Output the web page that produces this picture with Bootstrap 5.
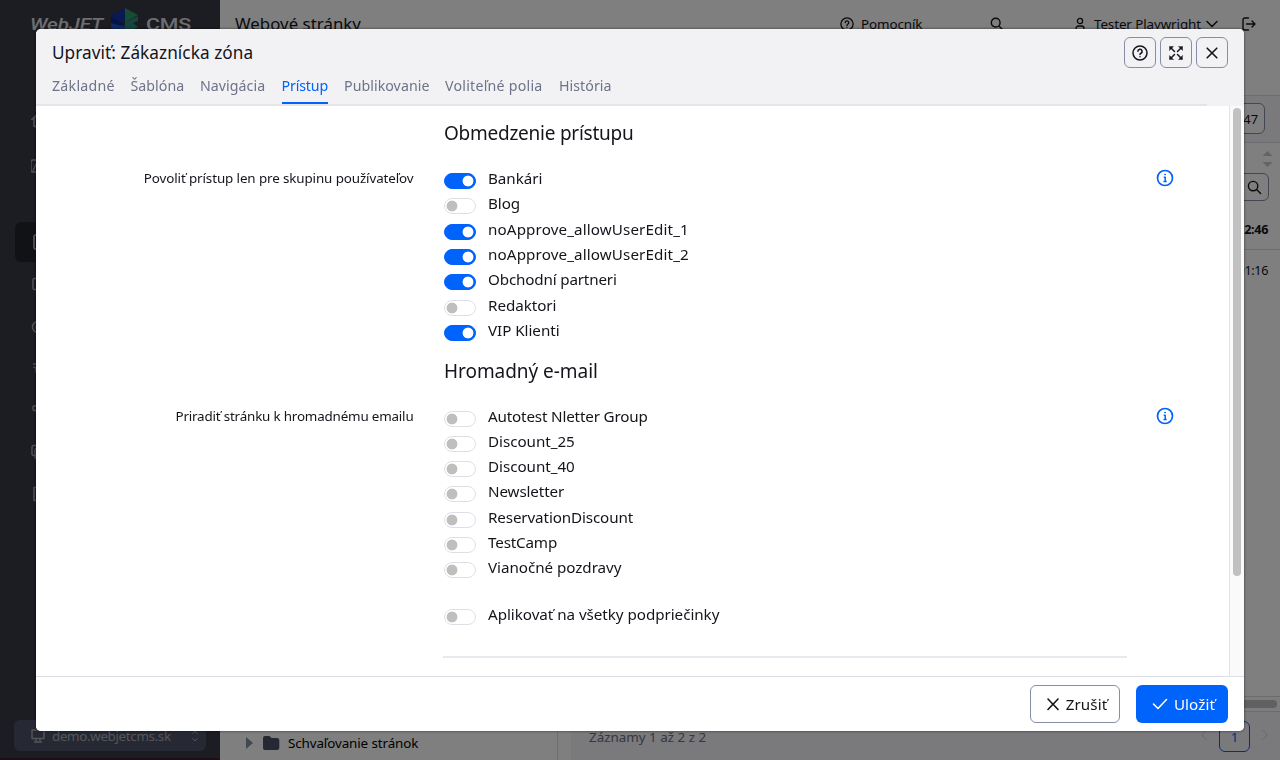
<!DOCTYPE html>
<html lang="sk">
<head>
<meta charset="utf-8">
<meta name="viewport" content="width=device-width, initial-scale=1">
<title>Webové stránky – WebJET CMS</title>
<link href="https://cdn.jsdelivr.net/npm/bootstrap@5.3.0/dist/css/bootstrap.min.css" rel="stylesheet">
<style>
body{font-family:"Noto Sans","Open Sans",sans-serif;font-size:15.2px;letter-spacing:-.1px;color:#13151b;overflow:hidden;background:#fff}
svg{display:block;fill:none;stroke:currentColor;stroke-linecap:round;stroke-linejoin:round;flex:none}
svg.solid{stroke:none}
/* sidebar */
.app{height:760px}
.side{width:220px;background:#383a44;color:#a4a6ae;border-bottom:2px solid #3a1f2f}
.side-logo{height:47px;padding:7px 0 0 28px}
.side-menu{padding-left:15px}
.side-item{height:42px;padding-left:16px;border-radius:6px}
.side-item.current{height:40px;margin-bottom:1px;width:190px;background:#23252c;color:#c4c5cb}
.domain{width:192px;height:31px;margin:0 0 7px 14px;background:#4d5366;border-radius:6px;color:#a9abb4;font-size:13.4px;letter-spacing:-.35px}
/* main area */
.topbar{height:95px;font-size:13.4px;padding-top:13px}
.topbar .page-title{font-size:16.8px;letter-spacing:.05px}
.tree{width:338px;border-right:1px solid #ddd}
.tree-row{height:34px;font-size:13.4px;color:#000}
.panel-bar{background:#f4f4f8;border:solid #dadae2;border-width:1px 0}
.grid-side{margin-left:13px}
.rowlimit{width:60px;height:31px;border:1px solid #868ea5;border-radius:6px;background:#fff;font-size:13px}
.searchbox{width:90px;height:28px;border:1px solid #868ea5;border-radius:6px}
.cell-time{height:41px;border-bottom:1px solid #dadae2;font-size:12.6px;letter-spacing:-.35px;padding:2px 12px 0 0}
.hscroll{height:16px;border:solid #d8d8d8;border-width:1px 0;background:#fafafa;padding:3px}
.hscroll div{height:8px;border-radius:4px;background:#c1c1c1}
.pager{height:48px;background:#f4f4f8;color:#6b7187;font-size:13.4px}
.page-arrow{color:#cfcfd6}
.page-btn{width:31px;height:31px;border:1px solid #0063fb;border-radius:6px;color:#0063fb}
/* dialog */
.modal-backdrop{--bs-backdrop-opacity:.5}
.modal-dialog{max-width:none;width:1208px;margin:29px 36px}
.modal-content{height:702px;border:0;border-radius:5px;overflow:hidden;box-shadow:0 0 3px rgba(0,0,0,.6)}
.modal-head{height:77px;background:#f2f2f5}
.modal-head h5{font-size:17.2px;line-height:24px;letter-spacing:.06px;font-weight:400;padding-top:12px}
.tool-btn{width:32px;height:31px;border:1px solid #868ea5;border-radius:6px;background:transparent;padding:0;color:#13151b}
.tabs{display:grid;grid-template-columns:78.5px 69.5px 81.5px 62.5px 101px 114px auto;font-size:14.2px;letter-spacing:.05px;height:31px;border-bottom:2px solid #e4e4ea;margin-right:37px;padding-left:16px}
.tabs .nav-link{padding:0;height:29px;line-height:22px;color:#6d7389;justify-self:start;white-space:nowrap;border-radius:0}
.tabs .nav-link.active{color:#0063fb;border-bottom:2px solid #0063fb}
.form-area{width:1193px;padding-top:15px}
.form-area h5{font-size:19px;letter-spacing:-.25px;line-height:24px;font-weight:400;margin:0 0 22px 408px}
.lbl{width:392.5px;padding-right:15px;font-size:13.4px;letter-spacing:-.11px;line-height:23px}
.opts{width:713.5px;padding:0 15px}
.form-check.form-switch{min-height:0;height:25.33px;padding:0;margin:0;display:flex;gap:12.5px}
.form-switch .form-check-input{width:32px;height:16px;margin:6px 0 0;float:none;flex:none;border:1px solid #dcdfe6;background-color:#fff;background-image:radial-gradient(circle,#bfbfbf 0 5px,transparent 5.8px);background-size:16px 16px;background-position:-1px center}
.form-switch .form-check-input:checked{background-color:#0063fb;border-color:#0063fb;background-image:radial-gradient(circle,#fff 0 5px,transparent 5.8px);background-position:15px center}
.form-check-label{line-height:23px;letter-spacing:-.04px}
.info{color:#0063fb;margin:2px 0 0 14px}
.form-area hr{margin:28px 102px 0 407px;border-top:2px solid #e8e8ee;opacity:1}
.vscroll{width:15px;background:#fafafa;border-left:1px solid #e3e3e3;padding:2px 3px 0}
.vscroll div{width:8px;height:468px;border-radius:4px;background:#c1c1c1}
.modal-foot{height:55px;border-top:1px solid #dcdde6;padding:8px 16px;background:#fff}
.modal-foot .btn{height:38px;font-size:15.2px;line-height:22px;border-radius:6px;letter-spacing:.1px;padding:0 11px 0 14px;gap:6px}
.btn-cancel,.btn-cancel:hover{border:1px solid #868ea5;color:#13151b;width:90px}
.btn-save,.btn-save:hover{background:#0063fb;color:#fff;width:92px}
</style>
</head>
<body>
<div class="app d-flex">
  <aside class="side d-flex flex-column">
    <div class="side-logo">
      <svg class="solid" width="166" height="28" viewBox="28 7 166 28">
        <text x="30" y="29.500" textLength="73" lengthAdjust="spacingAndGlyphs" font-family="Roboto" font-weight="500" font-style="italic" font-size="16" fill="#dcdce0">WebJET</text>
        <path d="M111 15 125 8v13l-14 7z" fill="#1535a0"/><path d="M111 17 125 24l-14 5z" fill="#0a2790"/><path d="M125 8l13 7-13 7z" fill="#2f9b68"/><path d="M125 22l13-6v5l-5 2 5 4-13 7z" fill="#2a8a78"/><path d="M111 23l14 4v8l-14-7z" fill="#1d55c8"/>
        <text x="146" y="29.500" textLength="45" lengthAdjust="spacingAndGlyphs" font-family="Roboto" font-weight="500" font-size="16" fill="#dcdce0">CMS</text>
      </svg>
    </div>
    <nav class="side-menu d-flex flex-column" aria-label="Menu">
      <div style="height:52px"></div>
      <div class="side-item d-flex align-items-center"><svg width="16" height="16" viewBox="0 0 16 16" stroke-width="1.500"><path d="M.8 7.500 8 1l7.200 6.500M3 6v8.500h3V10h4v4.500h3V6"/></svg></div>
      <div class="side-item d-flex align-items-center" style="margin-top:4px"><svg width="16" height="16" viewBox="0 0 16 16" stroke-width="1.300"><rect x="0" y="2" width="15" height="12" rx="1.500"/><path d="M2 13 5 6l3 4 2-2 3 5"/></svg></div>
      <div style="height:35px"></div>
      <div class="side-item current d-flex align-items-center"><svg width="16" height="16" viewBox="0 0 16 16" stroke-width="1.500"><rect x="3" y="1" width="11" height="14" rx="1.500"/></svg></div>
      <div class="side-item d-flex align-items-center"><svg width="16" height="16" viewBox="0 0 16 16" stroke-width="1.500"><rect x="2" y="2.500" width="12" height="11" rx="1.500"/></svg></div>
      <div class="side-item d-flex align-items-center"><svg width="16" height="16" viewBox="0 0 16 16" stroke-width="1.500"><circle cx="7" cy="9" r="5.500"/><circle cx="7" cy="9" r="2"/></svg></div>
      <div class="side-item d-flex align-items-center"><svg width="16" height="16" viewBox="0 0 16 16" stroke-width="1.300"><path d="M2.500 4h12M3 7.500h10M5 8v4"/></svg></div>
      <div class="side-item d-flex align-items-center"><svg width="16" height="16" viewBox="0 0 16 16" stroke-width="1.300"><rect x="2" y="4" width="4" height="4.500" rx="1"/><rect x="9" y="8" width="5" height="4" rx="1"/></svg></div>
      <div class="side-item d-flex align-items-center"><svg width="16" height="16" viewBox="0 0 16 16" stroke-width="1.400"><rect x="1" y="1.500" width="10" height="10" rx="1.500"/><rect x="4" y="4.500" width="11" height="10" rx="1.500"/></svg></div>
      <div class="side-item d-flex align-items-center"><svg width="16" height="16" viewBox="0 0 16 16" stroke-width="1.500"><path d="M3 1.500h10v13H3z"/></svg></div>
    </nav>
    <div class="domain mt-auto d-flex align-items-center ps-3 pe-2">
      <svg width="16" height="16" viewBox="0 0 16 16" stroke-width="1.400"><path d="M2 2h12v8.500H2zM6 11v3m4-3v3M4.500 14h7"/></svg>
      <span style="padding:2px 0 0 6px">demo.webjetcms.sk</span>
      <svg class="ms-auto" width="6" height="12" viewBox="0 0 6 12"><path d="M.8 3.500 3 1l2.200 2.500M.8 8.500 3 11l2.200-2.500"/></svg>
    </div>
  </aside>

  <main class="flex-grow-1 d-flex flex-column">
    <header class="topbar d-flex align-items-start">
      <div class="page-title" style="width:620px;padding-left:15px;margin-top:-2px">Webové stránky</div>
      <svg width="14" height="14" viewBox="0 0 16 16" stroke-width="1.500" style="margin-top:4px"><circle cx="8" cy="8" r="7"/><path d="M6 6.400a2 2 0 1 1 2.800 1.900q-.8.400-.8 1.300M8 11.700v.1"/></svg>
      <span style="width:136px;padding:1px 0 0 7px">Pomocník</span>
      <svg width="14" height="14" viewBox="0 0 16 16" stroke-width="1.600" style="margin-top:4px"><circle cx="6.500" cy="6.500" r="5"/><path d="m10.500 10.500 4 4"/></svg>
      <svg width="12" height="14" viewBox="0 0 12 14" stroke-width="1.300" style="margin:4px 0 0 70px"><circle cx="6" cy="4" r="2.600"/><path d="M2 13v-1.500a2.500 2.500 0 0 1 2.500-2.500h3A2.500 2.500 0 0 1 10 11.500V13"/></svg>
      <span class="text-nowrap" style="width:120px;padding:1px 0 0 8px">Tester Playwright</span>
      <svg width="12" height="8" viewBox="0 0 12 8" stroke-width="1.500" style="margin-top:7px"><path d="m1 1.500 5 5 5-5"/></svg>
      <svg width="14" height="14" viewBox="0 0 14 14" stroke-width="1.400" style="margin:4px 0 0 24px"><path d="M6.500 1H3Q1 1 1 3v8q0 2 2 2h3.500M4.500 7H13m-3-3 3 3-3 3"/></svg>
    </header>
    <div class="flex-grow-1 d-flex">
      <section class="tree d-flex flex-column justify-content-end">
        <div class="tree-row d-flex align-items-center">
          <svg class="solid" width="8" height="12" viewBox="0 0 8 12" style="margin-left:26px"><path d="M0 0 7 6 0 12z" fill="#868ea5"/></svg>
          <svg class="solid" width="17" height="14" viewBox="0 0 17 14" style="margin-left:9px"><path d="M2 0h4.500l2 2H14q2.300 0 2.300 2v8q0 2-2 2H2q-2 0-2-2V2q0-2 2-2z" fill="#4d5366"/></svg>
          <span style="margin-left:8px">Schvaľovanie stránok</span>
        </div>
      </section>
      <section class="grid-side flex-grow-1 d-flex flex-column">
        <div class="panel-bar d-flex justify-content-end" style="height:48px;padding:7px 15px 0 0"><div class="rowlimit text-end" style="line-height:30px;padding-right:6px">547</div></div>
        <div class="d-flex justify-content-end" style="height:30px;padding:8px 7px 0 0"><svg class="solid" width="11" height="16" viewBox="0 0 11 16"><path d="m5.500 0 5 5h-10zm0 16 5-5h-10z" fill="#c8c8c8"/></svg></div>
        <div class="d-flex justify-content-end" style="height:36px;padding-right:11px"><div class="searchbox d-flex align-items-center justify-content-end" style="padding-right:6px"><svg width="15" height="15" viewBox="0 0 16 16" stroke-width="1.500"><circle cx="6.500" cy="6.500" r="5"/><path d="m10.500 10.500 4 4"/></svg></div></div>
        <div class="cell-time d-flex align-items-center justify-content-end fw-bold">08:12:46</div>
        <div class="cell-time d-flex align-items-center justify-content-end border-0">08:01:16</div>
        <div class="hscroll mt-auto"><div></div></div>
        <div class="pager d-flex align-items-start" style="padding-left:18px">
          <span style="margin-top:15px;letter-spacing:0">Záznamy 1 až 2 z 2</span>
          <svg class="page-arrow ms-auto" width="6" height="10" viewBox="0 0 6 10" style="margin:18px 12px 0 0"><path d="M5 .5.8 5 5 9.500"/></svg>
          <div class="page-btn text-center" style="margin-top:9px;line-height:30px">1</div>
          <svg class="page-arrow" width="6" height="10" viewBox="0 0 6 10" style="margin:18px 12px 0 12px"><path d="M1 .5 5.200 5 1 9.500"/></svg>
        </div>
      </section>
    </div>
  </main>
</div>

<div class="modal-backdrop show"></div>
<div class="modal d-block" tabindex="-1" role="dialog">
  <div class="modal-dialog">
    <div class="modal-content">
      <div class="modal-head">
        <div class="d-flex justify-content-between px-3" style="height:46px">
          <h5 class="m-0">Upraviť: Zákaznícka zóna</h5>
          <div class="d-flex gap-1 pt-2">
            <button class="tool-btn d-flex align-items-center justify-content-center" aria-label="Pomocník"><svg width="16" height="16" viewBox="0 0 16 16" stroke-width="1.500"><circle cx="8" cy="8" r="7"/><path d="M5.900 6.300a2.100 2.100 0 1 1 3 1.900q-.9.400-.9 1.300M8 11.700v.1"/></svg></button>
            <button class="tool-btn d-flex align-items-center justify-content-center" aria-label="Zväčšiť"><svg width="14" height="14" viewBox="0 0 14 14" stroke-width="1.500"><path d="m1.500 1.500 4 4m3 3 4 4m0-11-4 4m-3 3-4 4"/><path d="M.5.500H4.500L.5 4.500zM13.500.500V4.500l-4-4zM.5 13.500v-4l4 4zM13.500 13.500h-4l4-4z" fill="currentColor" stroke-width=".4"/></svg></button>
            <button class="tool-btn d-flex align-items-center justify-content-center" aria-label="Zavrieť"><svg width="12" height="12" viewBox="0 0 12 12" stroke-width="1.600"><path d="m1.200 1.200 9.600 9.600m0-9.600-9.600 9.600"/></svg></button>
          </div>
        </div>
        <nav class="tabs nav">
          <a class="nav-link" style="letter-spacing:.25px">Základné</a><a class="nav-link">Šablóna</a><a class="nav-link">Navigácia</a><a class="nav-link active" style="letter-spacing:-.15px">Prístup</a><a class="nav-link">Publikovanie</a><a class="nav-link" style="letter-spacing:.24px">Voliteľné polia</a><a class="nav-link">História</a>
        </nav>
      </div>
      <div class="d-flex flex-grow-1 overflow-hidden">
        <div class="form-area">
          <h5>Obmedzenie prístupu</h5>
          <div class="d-flex" style="height:191.500px">
            <div class="lbl text-end">Povoliť prístup len pre skupinu používateľov</div>
            <div class="opts">
              <label class="form-check form-switch"><input class="form-check-input" type="checkbox" checked><span class="form-check-label">Bankári</span></label>
              <label class="form-check form-switch"><input class="form-check-input" type="checkbox"><span class="form-check-label">Blog</span></label>
              <label class="form-check form-switch"><input class="form-check-input" type="checkbox" checked><span class="form-check-label" style="letter-spacing:.12px">noApprove_allowUserEdit_1</span></label>
              <label class="form-check form-switch"><input class="form-check-input" type="checkbox" checked><span class="form-check-label" style="letter-spacing:.12px">noApprove_allowUserEdit_2</span></label>
              <label class="form-check form-switch"><input class="form-check-input" type="checkbox" checked><span class="form-check-label" style="letter-spacing:-.16px">Obchodní partneri</span></label>
              <label class="form-check form-switch"><input class="form-check-input" type="checkbox"><span class="form-check-label">Redaktori</span></label>
              <label class="form-check form-switch"><input class="form-check-input" type="checkbox" checked><span class="form-check-label">VIP Klienti</span></label>
            </div>
            <svg class="info" width="18" height="18" viewBox="0 0 18 18" stroke-width="1.700"><circle cx="9" cy="9" r="7.500"/><path d="M7.700 8.200H9.200v4M7.500 12.400h3.200" stroke-width="1.500" stroke-linecap="butt"/><circle cx="9" cy="5.500" r=".5" stroke-width="1"/></svg>
          </div>
          <h5 style="letter-spacing:-.05px">Hromadný e-mail</h5>
          <div class="d-flex" style="height:198px">
            <div class="lbl text-end" style="letter-spacing:-.18px">Priradiť stránku k hromadnému emailu</div>
            <div class="opts">
              <label class="form-check form-switch"><input class="form-check-input" type="checkbox"><span class="form-check-label" style="letter-spacing:-.16px">Autotest Nletter Group</span></label>
              <label class="form-check form-switch"><input class="form-check-input" type="checkbox"><span class="form-check-label">Discount_25</span></label>
              <label class="form-check form-switch"><input class="form-check-input" type="checkbox"><span class="form-check-label">Discount_40</span></label>
              <label class="form-check form-switch"><input class="form-check-input" type="checkbox"><span class="form-check-label" style="letter-spacing:-.12px">Newsletter</span></label>
              <label class="form-check form-switch"><input class="form-check-input" type="checkbox"><span class="form-check-label" style="letter-spacing:-.12px">ReservationDiscount</span></label>
              <label class="form-check form-switch"><input class="form-check-input" type="checkbox"><span class="form-check-label" style="letter-spacing:-.16px">TestCamp</span></label>
              <label class="form-check form-switch"><input class="form-check-input" type="checkbox"><span class="form-check-label">Vianočné pozdravy</span></label>
            </div>
            <svg class="info" width="18" height="18" viewBox="0 0 18 18" stroke-width="1.700"><circle cx="9" cy="9" r="7.500"/><path d="M7.700 8.200H9.200v4M7.500 12.400h3.200" stroke-width="1.500" stroke-linecap="butt"/><circle cx="9" cy="5.500" r=".5" stroke-width="1"/></svg>
          </div>
          <div class="opts" style="margin-left:392.500px"><label class="form-check form-switch"><input class="form-check-input" type="checkbox"><span class="form-check-label">Aplikovať na všetky podpriečinky</span></label></div>
          <hr>
        </div>
        <div class="vscroll"><div></div></div>
      </div>
      <div class="modal-foot d-flex justify-content-end gap-3">
        <button class="btn btn-cancel d-flex align-items-center justify-content-center"><svg width="14" height="14" viewBox="0 0 14 14" stroke-width="1.600"><path d="m2 2 10 10.500m0-10.500L2 12.500"/></svg>Zrušiť</button>
        <button class="btn btn-save d-flex align-items-center justify-content-center"><svg width="16" height="12" viewBox="0 0 16 12" stroke-width="1.600"><path d="m1.500 6 4.500 4.500L14.500 1.500"/></svg>Uložiť</button>
      </div>
    </div>
  </div>
</div>
<script src="https://cdn.jsdelivr.net/npm/bootstrap@5.3.0/dist/js/bootstrap.bundle.min.js"></script>
</body>
</html>
